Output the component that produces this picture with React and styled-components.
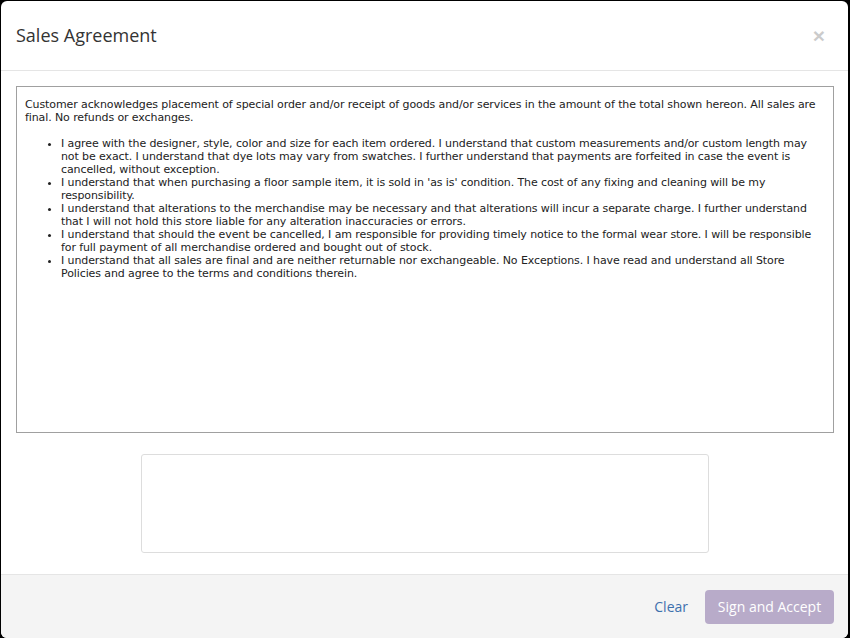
import React from "react";
import styled, { createGlobalStyle } from "styled-components";

const Global = createGlobalStyle`
  html, body { margin: 0; padding: 0; background: #000; }
  body { font-family: "Open Sans", "Liberation Sans", sans-serif; }
  * { box-sizing: border-box; }
`;

const Backdrop = styled.div`
  width: 850px;
  height: 638px;
  overflow: hidden;
  padding: 1px 2px 0 1px;
`;

const Modal = styled.div`
  width: 847px;
  height: 637px;
  background: #fff;
  border-radius: 6px;
  overflow: hidden;
  display: flex;
  flex-direction: column;
`;

const Header = styled.div`
  height: 70px;
  padding: 0 15px;
  display: flex;
  align-items: center;
  justify-content: space-between;
  border-bottom: 1px solid #e5e5e5;
`;

const Title = styled.h4`
  margin: 0;
  font-family: "Open Sans", sans-serif;
  font-size: 18px;
  font-weight: 400;
  color: #333;
  padding-bottom: 1px;
`;

const Close = styled.button`
  border: 0;
  background: transparent;
  padding: 0;
  margin-right: 8px;
  font-family: "Liberation Sans", sans-serif;
  font-size: 21px;
  font-weight: 700;
  line-height: 1;
  color: #000;
  opacity: 0.2;
  cursor: pointer;
`;

const Body = styled.div`
  flex: 1;
  padding: 15px 14px 20px 15px;
  display: flex;
  flex-direction: column;
  align-items: center;
`;

const Terms = styled.div`
  align-self: stretch;
  height: 347px;
  border: 1px solid #a0a0a0;
  padding: 8px 8px;
  font-family: "DejaVu Sans", Verdana, sans-serif;
  font-size: 11px;
  line-height: 13px;
  letter-spacing: -0.1px;
  color: #222;
  overflow: hidden;
`;

const Para = styled.p`
  margin: 3px 0 13px;
`;

const List = styled.ul`
  margin: 0;
  padding-left: 36px;
`;

const Item = styled.li`
  margin: 0;
`;

const SignaturePad = styled.div`
  margin-top: 21px;
  width: 568px;
  height: 99px;
  border: 1px solid #ddd;
  border-radius: 3px;
  background: #fff;
`;

const Footer = styled.div`
  height: 64px;
  border-top: 1px solid #e5e5e5;
  background: #f4f4f4;
  padding: 15px 14px 15px 15px;
  display: flex;
  justify-content: flex-end;
  align-items: center;
  gap: 17px;
`;

const LinkButton = styled.button`
  border: 0;
  background: transparent;
  padding: 0;
  font-family: "Open Sans", sans-serif;
  font-size: 14px;
  color: #3d70ad;
  cursor: pointer;
`;

const PrimaryButton = styled.button`
  width: 129px;
  height: 34px;
  border: 0;
  border-radius: 4px;
  background: #b8abc9;
  color: #fff;
  font-family: "Open Sans", sans-serif;
  font-size: 14px;
  padding: 0 12px;
  cursor: not-allowed;
`;

const items = [
  "I agree with the designer, style, color and size for each item ordered. I understand that custom measurements and/or custom length may not be exact. I understand that dye lots may vary from swatches. I further understand that payments are forfeited in case the event is cancelled, without exception.",
  "I understand that when purchasing a floor sample item, it is sold in 'as is' condition. The cost of any fixing and cleaning will be my responsibility.",
  "I understand that alterations to the merchandise may be necessary and that alterations will incur a separate charge. I further understand that I will not hold this store liable for any alteration inaccuracies or errors.",
  "I understand that should the event be cancelled, I am responsible for providing timely notice to the formal wear store. I will be responsible for full payment of all merchandise ordered and bought out of stock.",
  "I understand that all sales are final and are neither returnable nor exchangeable. No Exceptions. I have read and understand all Store Policies and agree to the terms and conditions therein.",
];

export default function App() {
  return (
    <>
      <Global />
      <Backdrop>
        <Modal>
          <Header>
            <Title>Sales Agreement</Title>
            <Close aria-label="Close">×</Close>
          </Header>
          <Body>
            <Terms>
              <Para>
                Customer acknowledges placement of special order and/or receipt of goods and/or services in the amount of the total shown hereon. All sales are final. No refunds or exchanges.
              </Para>
              <List>
                {items.map((t, i) => (
                  <Item key={i}>{t}</Item>
                ))}
              </List>
            </Terms>
            <SignaturePad />
          </Body>
          <Footer>
            <LinkButton>Clear</LinkButton>
            <PrimaryButton disabled>Sign and Accept</PrimaryButton>
          </Footer>
        </Modal>
      </Backdrop>
    </>
  );
}
